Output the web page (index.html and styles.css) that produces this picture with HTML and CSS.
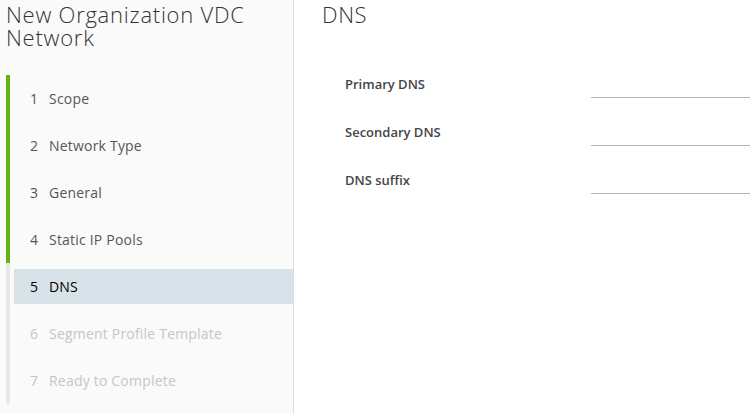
FILE: index.html
```html
<!DOCTYPE html>
<html>
<head>
<meta charset="utf-8">
<link rel="stylesheet" href="styles.css">
</head>
<body>
<div class="wizard">
  <aside class="nav">
    <h1 class="title">New Organization VDC Network</h1>
    <ol class="steps">
      <li class="step done"><div class="step-inner"><span class="num">1</span>Scope</div></li>
      <li class="step done"><div class="step-inner"><span class="num">2</span>Network Type</div></li>
      <li class="step done"><div class="step-inner"><span class="num">3</span>General</div></li>
      <li class="step done"><div class="step-inner"><span class="num">4</span>Static IP Pools</div></li>
      <li class="step current"><div class="step-inner"><span class="num">5</span>DNS</div></li>
      <li class="step todo"><div class="step-inner"><span class="num">6</span>Segment Profile Template</div></li>
      <li class="step todo"><div class="step-inner"><span class="num">7</span>Ready to Complete</div></li>
    </ol>
  </aside>
  <main class="content">
    <h2 class="heading">DNS</h2>
    <form class="form">
      <div class="row"><label class="label">Primary DNS</label><input class="field" type="text"></div>
      <div class="row"><label class="label">Secondary DNS</label><input class="field" type="text"></div>
      <div class="row"><label class="label">DNS suffix</label><input class="field" type="text"></div>
    </form>
  </main>
</div>
</body>
</html>
```
FILE: styles.css
```css
* { box-sizing: border-box; }
html, body { margin: 0; padding: 0; background: #fff; }
body {
  font-family: "Open Sans", "Liberation Sans", sans-serif;
  color: #333;
  width: 750px;
  height: 413px;
  overflow: hidden;
}
.wizard {
  display: flex;
  height: 413px;
}
.nav {
  width: 294px;
  flex: none;
  background: #fafafa;
  border-right: 1px solid #dedede;
  padding: 0 0 0 6px;
}
.title {
  margin: 0;
  padding-top: 3px;
  font-weight: 300;
  font-size: 22px;
  line-height: 23px;
  color: #333;
  letter-spacing: 0.75px;
}
.steps {
  list-style: none;
  margin: 26px 0 0 0;
  padding: 0;
}
.step {
  height: 47px;
  border-left: 4px solid #e8e8e8;
  padding: 6px 0 6px 4px;
}
.step.done { border-left-color: #60b515; }
.step-inner {
  height: 35px;
  display: flex;
  align-items: center;
  padding-left: 16px;
  font-size: 14px;
  letter-spacing: 0.2px;
  color: #565656;
}
.num { width: 19px; }
.step.current .step-inner {
  background: #d8e3e9;
  color: #000;
}
.step.todo .step-inner { color: #c6c6c6; }
.content {
  flex: 1;
  padding-left: 28px;
}
.heading {
  margin: 0;
  padding-top: 1px;
  font-weight: 300;
  font-size: 22px;
  line-height: 26px;
  letter-spacing: 0.6px;
  color: #333;
}
.form {
  margin-top: 45px;
  padding-left: 23px;
}
.row {
  display: flex;
  align-items: flex-start;
  height: 48px;
}
.label {
  width: 246px;
  flex: none;
  font-size: 13px;
  font-weight: 600;
  color: #454545;
  line-height: 24px;
}
.field {
  flex: 1;
  height: 26px;
  border: none;
  border-bottom: 1px solid #b3b3b3;
  background: transparent;
  outline: none;
  padding: 0;
}
```
